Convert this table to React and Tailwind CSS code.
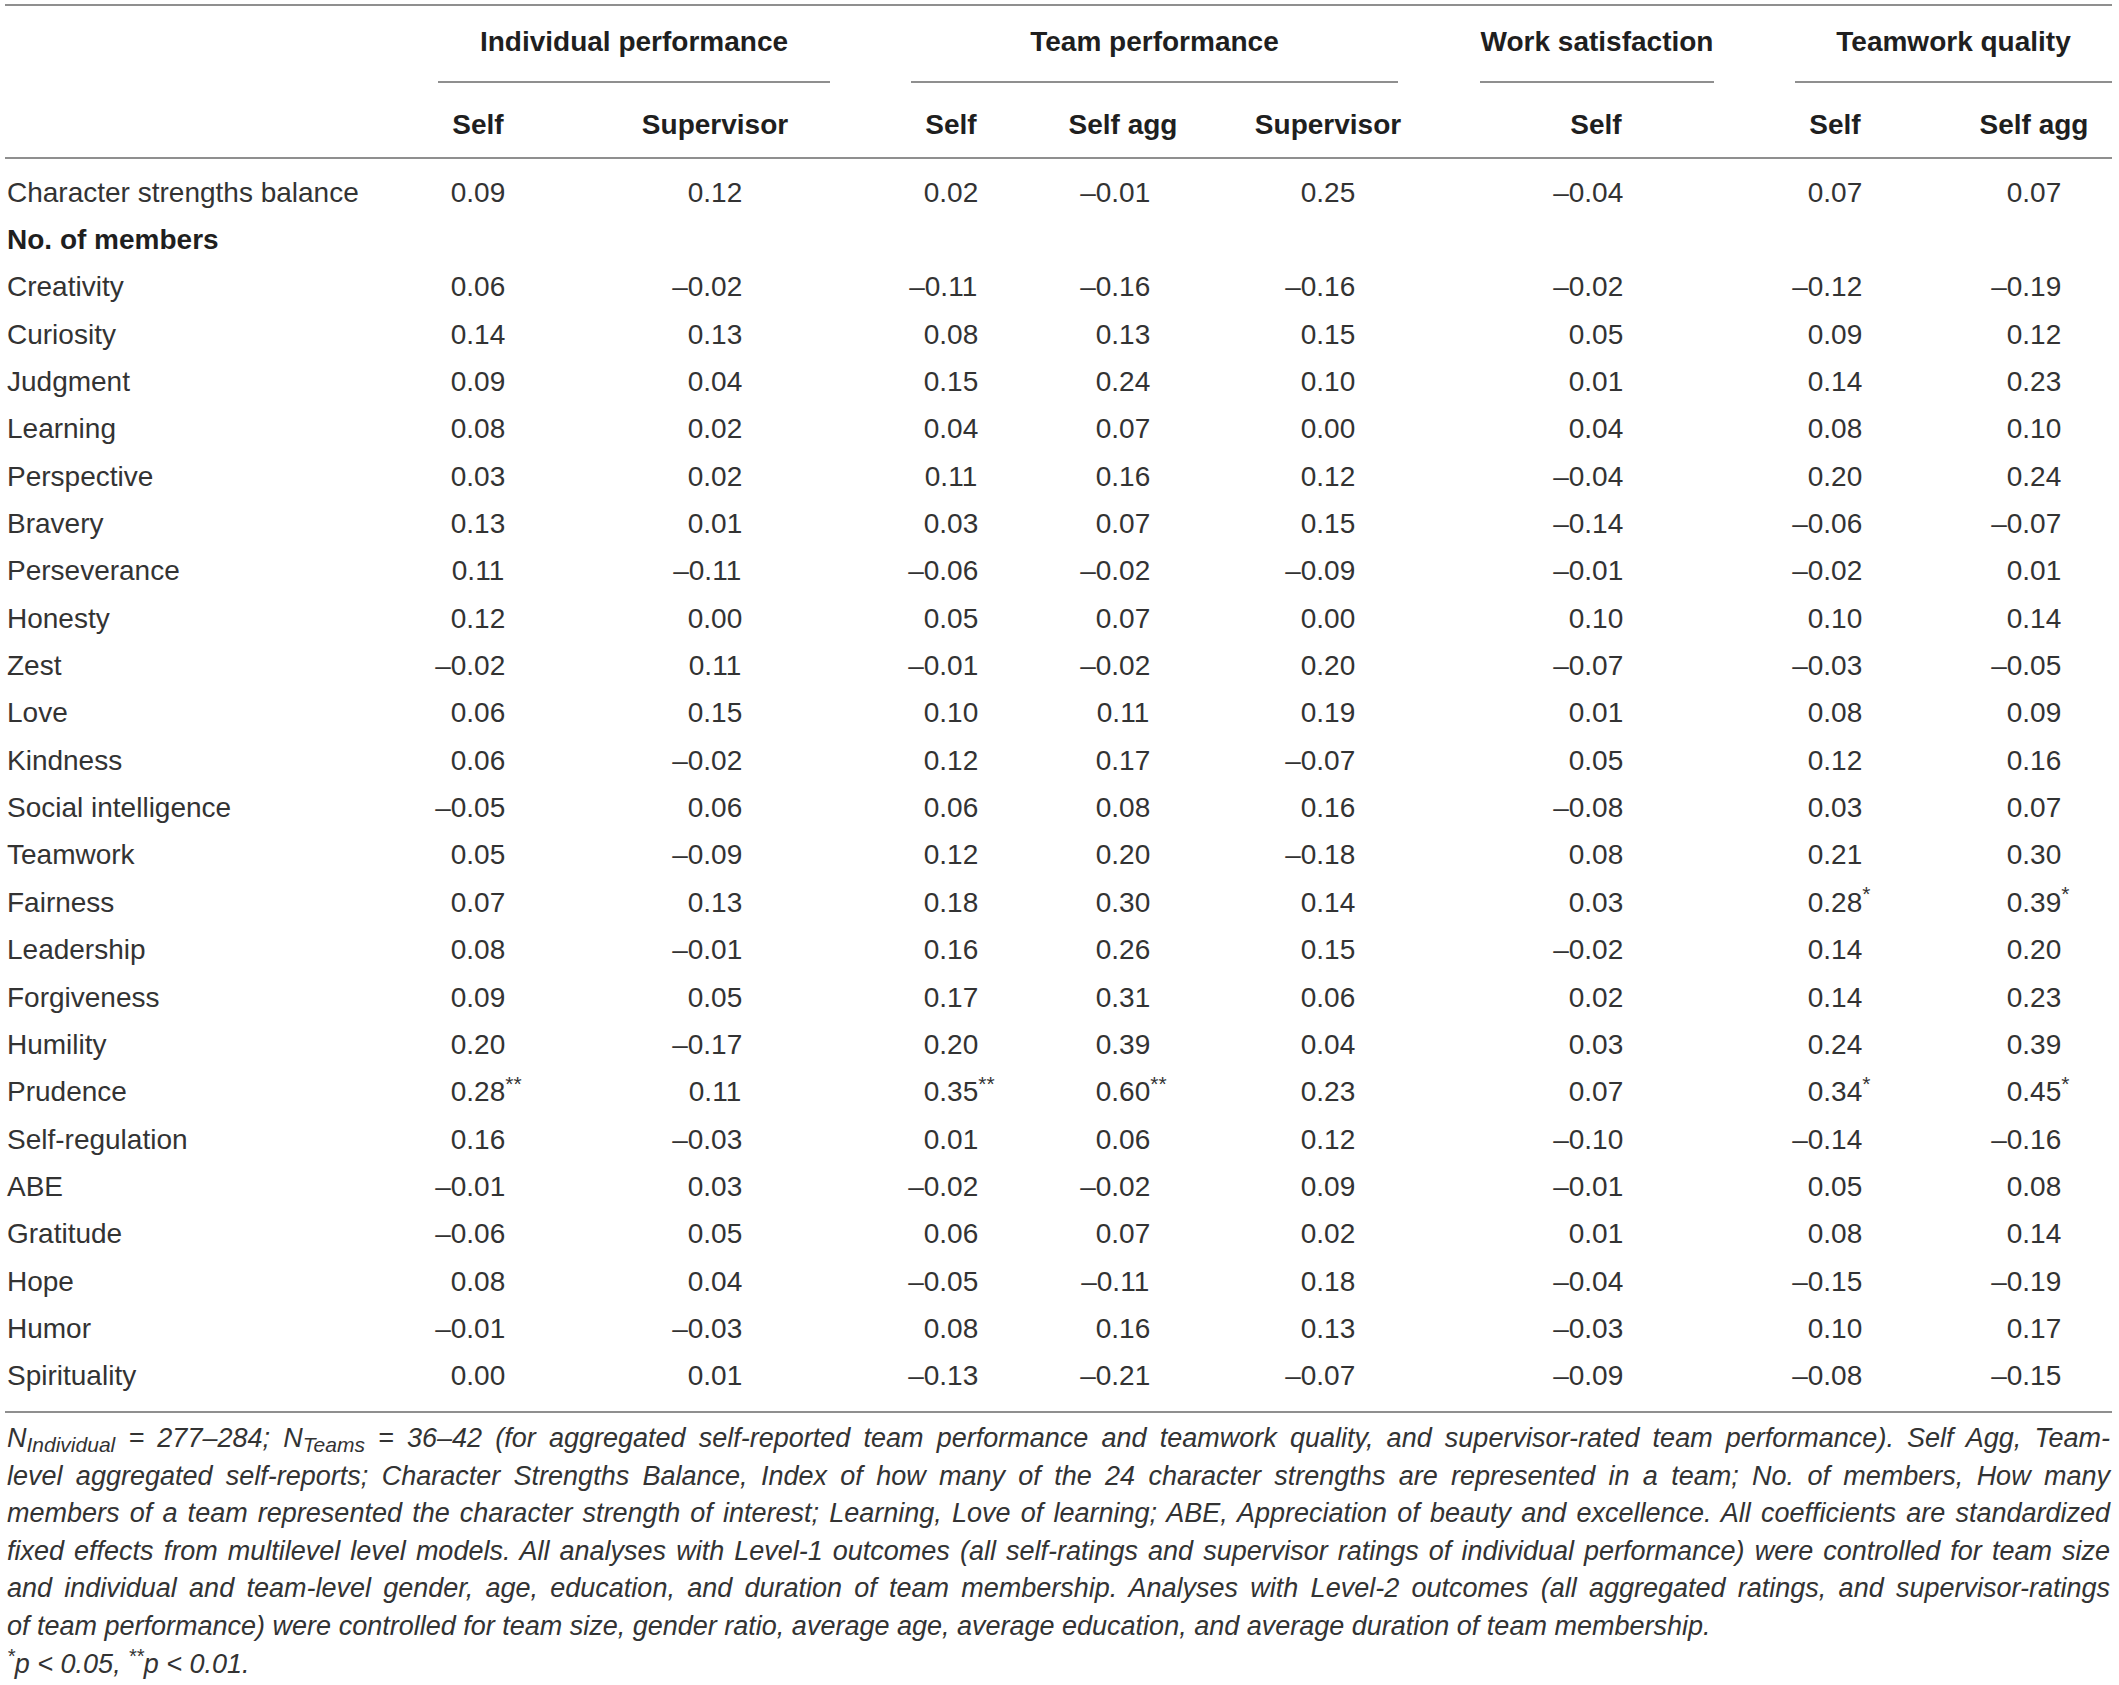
const rows = [
  ['Character strengths balance', ['0.09', '0.12', '0.02', '–0.01', '0.25', '–0.04', '0.07', '0.07']],
  ['No. of members', null],
  ['Creativity', ['0.06', '–0.02', '–0.11', '–0.16', '–0.16', '–0.02', '–0.12', '–0.19']],
  ['Curiosity', ['0.14', '0.13', '0.08', '0.13', '0.15', '0.05', '0.09', '0.12']],
  ['Judgment', ['0.09', '0.04', '0.15', '0.24', '0.10', '0.01', '0.14', '0.23']],
  ['Learning', ['0.08', '0.02', '0.04', '0.07', '0.00', '0.04', '0.08', '0.10']],
  ['Perspective', ['0.03', '0.02', '0.11', '0.16', '0.12', '–0.04', '0.20', '0.24']],
  ['Bravery', ['0.13', '0.01', '0.03', '0.07', '0.15', '–0.14', '–0.06', '–0.07']],
  ['Perseverance', ['0.11', '–0.11', '–0.06', '–0.02', '–0.09', '–0.01', '–0.02', '0.01']],
  ['Honesty', ['0.12', '0.00', '0.05', '0.07', '0.00', '0.10', '0.10', '0.14']],
  ['Zest', ['–0.02', '0.11', '–0.01', '–0.02', '0.20', '–0.07', '–0.03', '–0.05']],
  ['Love', ['0.06', '0.15', '0.10', '0.11', '0.19', '0.01', '0.08', '0.09']],
  ['Kindness', ['0.06', '–0.02', '0.12', '0.17', '–0.07', '0.05', '0.12', '0.16']],
  ['Social intelligence', ['–0.05', '0.06', '0.06', '0.08', '0.16', '–0.08', '0.03', '0.07']],
  ['Teamwork', ['0.05', '–0.09', '0.12', '0.20', '–0.18', '0.08', '0.21', '0.30']],
  ['Fairness', ['0.07', '0.13', '0.18', '0.30', '0.14', '0.03', '0.28*', '0.39*']],
  ['Leadership', ['0.08', '–0.01', '0.16', '0.26', '0.15', '–0.02', '0.14', '0.20']],
  ['Forgiveness', ['0.09', '0.05', '0.17', '0.31', '0.06', '0.02', '0.14', '0.23']],
  ['Humility', ['0.20', '–0.17', '0.20', '0.39', '0.04', '0.03', '0.24', '0.39']],
  ['Prudence', ['0.28**', '0.11', '0.35**', '0.60**', '0.23', '0.07', '0.34*', '0.45*']],
  ['Self-regulation', ['0.16', '–0.03', '0.01', '0.06', '0.12', '–0.10', '–0.14', '–0.16']],
  ['ABE', ['–0.01', '0.03', '–0.02', '–0.02', '0.09', '–0.01', '0.05', '0.08']],
  ['Gratitude', ['–0.06', '0.05', '0.06', '0.07', '0.02', '0.01', '0.08', '0.14']],
  ['Hope', ['0.08', '0.04', '–0.05', '–0.11', '0.18', '–0.04', '–0.15', '–0.19']],
  ['Humor', ['–0.01', '–0.03', '0.08', '0.16', '0.13', '–0.03', '0.10', '0.17']],
  ['Spirituality', ['0.00', '0.01', '–0.13', '–0.21', '–0.07', '–0.09', '–0.08', '–0.15']],
];

const subHeads = ['Self', 'Supervisor', 'Self', 'Self agg', 'Supervisor', 'Self', 'Self', 'Self agg'];

const cols = 'grid grid-cols-[355px_236px_238px_234px_110px_300px_236px_242px_156px]';
const justify = 'whitespace-nowrap text-justify [text-align-last:justify]';

// digits stay lined up; the dash hangs left, the stars hang right
const Num = ({ v }) => {
  const neg = v.startsWith('–');
  const stars = (v.match(/\*+$/) || [''])[0];
  const digits = v.replace('–', '').replace(/\*+$/, '');
  return (
    <div className="flex justify-center leading-[34px]">
      <span className="flex w-0 min-w-0 shrink-0 justify-end">{neg ? '–' : ''}</span>
      <span>{digits}</span>
      <span className="w-0 min-w-0 shrink-0 whitespace-nowrap">
        <sup className="text-[21px]">{stars}</sup>
      </span>
    </div>
  );
};

const GroupHead = ({ className, children }) => (
  <div className={`h-[77px] border-b-2 border-[#8f8f8f] pt-[19px] text-center font-bold leading-[34px] whitespace-nowrap text-[#1f1f1f] ${className}`}>
    {children}
  </div>
);

export default function App() {
  return (
    <div className="min-h-[1685px] w-[2119px] bg-white pt-[4px] font-['Liberation_Sans',Arial,sans-serif] text-[28px] text-[#333333]">
      <div className="ml-[5px] w-[2107px] border-t-2 border-[#8f8f8f]">
        <div className={cols}>
          <div />
          <GroupHead className="col-span-2 ml-[78px] mr-[4px]">Individual performance</GroupHead>
          <GroupHead className="col-span-3 ml-[77px] mr-[80px]">Team performance</GroupHead>
          <GroupHead className="ml-[2px]">Work satisfaction</GroupHead>
          <GroupHead className="col-span-2 ml-[81px]">Teamwork quality</GroupHead>
        </div>

        <div className={`${cols} h-[76px] border-b-2 border-[#8f8f8f]`}>
          <div />
          {subHeads.map((h, i) => (
            <div key={i} className="pt-[25px] text-center font-bold leading-[34px] whitespace-nowrap text-[#1f1f1f]">
              {h}
            </div>
          ))}
        </div>

        <div className="border-b-2 border-[#8f8f8f] pt-[10px] pb-[11px]">
          {rows.map(([label, vals]) => (
            <div key={label} className={`${cols} h-[47.35px] items-center`}>
              <div className={`pl-[2px] leading-[34px] whitespace-nowrap ${vals ? '' : 'font-bold text-[#1f1f1f]'}`}>{label}</div>
              {vals && vals.map((v, i) => <Num key={i} v={v} />)}
            </div>
          ))}
        </div>

        <div className="pl-[2px] pr-[2px] pt-[7px] text-[27px] italic leading-[37.6px]">
          <div className={justify}>
            N<sub className="text-[21px]">Individual</sub> = 277–284; N<sub className="text-[21px]">Teams</sub> = 36–42 (for aggregated self-reported team performance and teamwork quality, and supervisor-rated team performance). Self Agg, Team-
          </div>
          <div className={justify}>
            level aggregated self-reports; Character Strengths Balance, Index of how many of the 24 character strengths are represented in a team; No. of members, How many
          </div>
          <div className={justify}>
            members of a team represented the character strength of interest; Learning, Love of learning; ABE, Appreciation of beauty and excellence. All coefficients are standardized
          </div>
          <div className={justify}>
            fixed effects from multilevel level models. All analyses with Level-1 outcomes (all self-ratings and supervisor ratings of individual performance) were controlled for team size
          </div>
          <div className={justify}>
            and individual and team-level gender, age, education, and duration of team membership. Analyses with Level-2 outcomes (all aggregated ratings, and supervisor-ratings
          </div>
          <div className="whitespace-nowrap">
            of team performance) were controlled for team size, gender ratio, average age, average education, and average duration of team membership.
          </div>
          <div className="whitespace-nowrap">
            <sup className="text-[20px]">*</sup>p &lt; 0.05, <sup className="text-[20px]">**</sup>p &lt; 0.01.
          </div>
        </div>
      </div>
    </div>
  );
}
